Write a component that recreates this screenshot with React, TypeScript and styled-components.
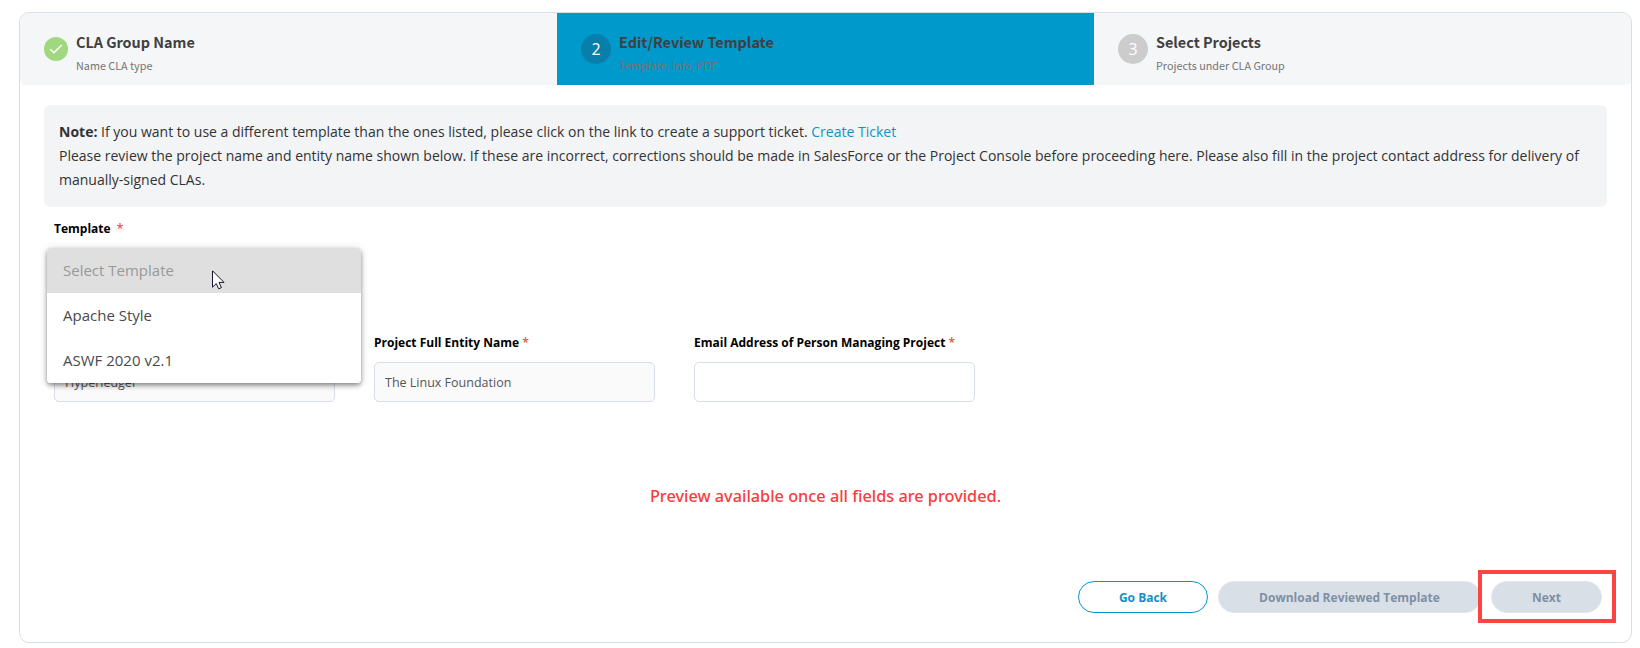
import React from 'react';
import styled, { createGlobalStyle } from 'styled-components';

const GlobalStyle = createGlobalStyle`
  * { box-sizing: border-box; }
  body {
    margin: 0;
    background: #fff;
    font-family: "Open Sans", sans-serif;
    color: #333;
  }
`;

const Page = styled.main`
  width: 1640px;
  height: 648px;
  padding: 12px 8px 5px 19px;
  overflow: hidden;
`;

const Card = styled.section`
  display: flex;
  flex-direction: column;
  height: 631px;
  border: 1px solid #d9dfe8;
  border-radius: 10px;
`;

const Steps = styled.header`
  display: grid;
  grid-template-columns: repeat(3, 1fr);
  height: 72px;
  flex: none;
  background: #f4f6f8;
  border-radius: 9px 9px 5px 5px;
`;

const Step = styled.div<{ $active?: boolean }>`
  display: flex;
  align-items: flex-start;
  gap: 8px;
  padding: 21px 24px 0;
  background: ${(p) => (p.$active ? '#0099cc' : 'transparent')};
`;

const Badge = styled.span<{ $size: number; $color: string }>`
  display: flex;
  align-items: center;
  justify-content: center;
  flex: none;
  width: ${(p) => p.$size}px;
  height: ${(p) => p.$size}px;
  margin-top: ${(p) => (30 - p.$size) / 2}px;
  border-radius: 50%;
  background: ${(p) => p.$color};
  color: #fff;
  font: 400 16px/30px "Open Sans", sans-serif;
`;

const StepTitle = styled.div`
  font: 700 14.4px/20px "Noto Sans CJK SC", sans-serif;
  color: #404040;
  margin-top: -2px;
`;

const StepHint = styled.div`
  font: 400 10.8px/16px "Noto Sans CJK SC", sans-serif;
  color: #757575;
  margin-top: 5px;
`;

const Body = styled.div`
  display: flex;
  flex-direction: column;
  flex: 1;
  padding: 20px 24px 0;
`;

const Note = styled.p`
  margin: 0;
  height: 102px;
  padding: 15px;
  border-radius: 6px;
  background: #f2f4f6;
  font-size: 14px;
  line-height: 24px;
`;

const TicketLink = styled.a`
  color: #0e95c8;
`;

const TemplateField = styled.div`
  position: relative;
  height: 122px;
  padding: 13px 10px 0;
`;

const Label = styled.label`
  display: block;
  font-size: 12px;
  font-weight: 700;
  line-height: 18px;
  color: #000;
`;

const Required = styled.span<{ $gap?: number }>`
  margin-left: ${(p) => p.$gap ?? 0}px;
  color: #f44;
  font-weight: 600;
`;

const Menu = styled.ul`
  position: absolute;
  z-index: 2;
  top: 41px;
  left: 3px;
  width: 314px;
  margin: 0;
  padding: 0;
  list-style: none;
  overflow: hidden;
  border-radius: 4px;
  background: #fff;
  box-shadow: 0 2px 4px -1px rgba(0, 0, 0, 0.3), 0 3px 5px rgba(0, 0, 0, 0.2),
    0 1px 8px rgba(0, 0, 0, 0.16);
`;

const Option = styled.li<{ $selected?: boolean }>`
  height: 45px;
  padding: 0 16px;
  font-size: 15px;
  line-height: 45px;
  color: ${(p) => (p.$selected ? '#999' : '#4a4a4a')};
  background: ${(p) => (p.$selected ? '#dfdfdf' : '#fff')};
`;

const Pointer = styled.svg`
  position: absolute;
  z-index: 3;
  left: 168px;
  top: 63px;
`;

const Fields = styled.div`
  display: grid;
  grid-template-columns: repeat(3, 281px);
  column-gap: 39px;
  padding: 5px 10px 0;
`;

const Input = styled.input`
  width: 100%;
  height: 40px;
  margin-top: 10px;
  padding: 0 10px;
  border: 1px solid #d9dfe8;
  border-radius: 5px;
  outline: 0;
  background: ${(p) => (p.readOnly ? '#fafafa' : '#fff')};
  color: #555;
  font: 12.5px "Open Sans", sans-serif;
`;

const Preview = styled.p`
  margin: 82px 0 0;
  text-align: center;
  font: 500 16.3px/24px "Noto Sans", sans-serif;
  color: #f73d3d;
`;

const Actions = styled.footer`
  display: flex;
  justify-content: flex-end;
  gap: 10px;
  margin-top: 73px;
  padding-right: 5px;
`;

const Button = styled.button<{ $width: number; $outline?: boolean }>`
  width: ${(p) => p.$width}px;
  height: 32px;
  padding: 0;
  border: 1px solid ${(p) => (p.$outline ? '#0099cc' : '#e2e5e9')};
  border-radius: 16px;
  background: ${(p) => (p.$outline ? '#fff' : '#d9dfe7')};
  color: ${(p) => (p.$outline ? '#1191c5' : '#8090a4')};
  font: 700 12px "Open Sans", sans-serif;
`;

const NextWrap = styled.div`
  position: relative;
`;

const Highlight = styled.span`
  position: absolute;
  inset: -11px -14px -10px -13px;
  border: 4px solid #ff4343;
  pointer-events: none;
`;

export default function App() {
  return (
    <Page>
      <GlobalStyle />
      <Card>
        <Steps>
          <Step>
            <Badge $size={24} $color="#a0d880">
              <svg width="14" height="12" viewBox="0 0 14 12" fill="none">
                <path d="M1.3 6.2 5 9.8 12.7 2" stroke="#fff" strokeWidth="1.5" />
              </svg>
            </Badge>
            <div>
              <StepTitle>CLA Group Name</StepTitle>
              <StepHint>Name CLA type</StepHint>
            </div>
          </Step>
          <Step $active>
            <Badge $size={30} $color="#087fab">2</Badge>
            <div>
              <StepTitle>Edit/Review Template</StepTitle>
              <StepHint>Template, Info, PDF</StepHint>
            </div>
          </Step>
          <Step>
            <Badge $size={30} $color="#cccccc">3</Badge>
            <div>
              <StepTitle>Select Projects</StepTitle>
              <StepHint>Projects under CLA Group</StepHint>
            </div>
          </Step>
        </Steps>
        <Body>
          <Note>
            <strong>Note:</strong> If you want to use a different template than the ones listed,
            please click on the link to create a support ticket. <TicketLink>Create Ticket</TicketLink>
            <br />
            Please review the project name and entity name shown below. If these are incorrect,
            corrections should be made in SalesForce or the Project Console before proceeding here.
            Please also fill in the project contact address for delivery of manually-signed CLAs.
          </Note>
          <TemplateField>
            <Label>
              Template <Required $gap={3}>*</Required>
            </Label>
            <Menu>
              <Option $selected>Select Template</Option>
              <Option>Apache Style</Option>
              <Option>ASWF 2020 v2.1</Option>
            </Menu>
            <Pointer width="13" height="20" viewBox="0 0 13 20">
              <path
                d="M.5.8V17.2L4.3 13.6 6.7 18.8 9.4 17.6 7 12.4H12Z"
                fill="#fff"
                stroke="#15152a"
              />
            </Pointer>
          </TemplateField>
          <Fields>
            <div>
              <Label>
                Project Name <Required>*</Required>
              </Label>
              <Input readOnly value="Hyperledger" />
            </div>
            <div>
              <Label>
                Project Full Entity Name <Required>*</Required>
              </Label>
              <Input readOnly value="The Linux Foundation" />
            </div>
            <div>
              <Label>
                Email Address of Person Managing Project <Required>*</Required>
              </Label>
              <Input />
            </div>
          </Fields>
          <Preview>Preview available once all fields are provided.</Preview>
          <Actions>
            <Button $width={130} $outline>
              Go Back
            </Button>
            <Button $width={263}>Download Reviewed Template</Button>
            <NextWrap>
              <Button $width={111}>Next</Button>
              <Highlight />
            </NextWrap>
          </Actions>
        </Body>
      </Card>
    </Page>
  );
}
